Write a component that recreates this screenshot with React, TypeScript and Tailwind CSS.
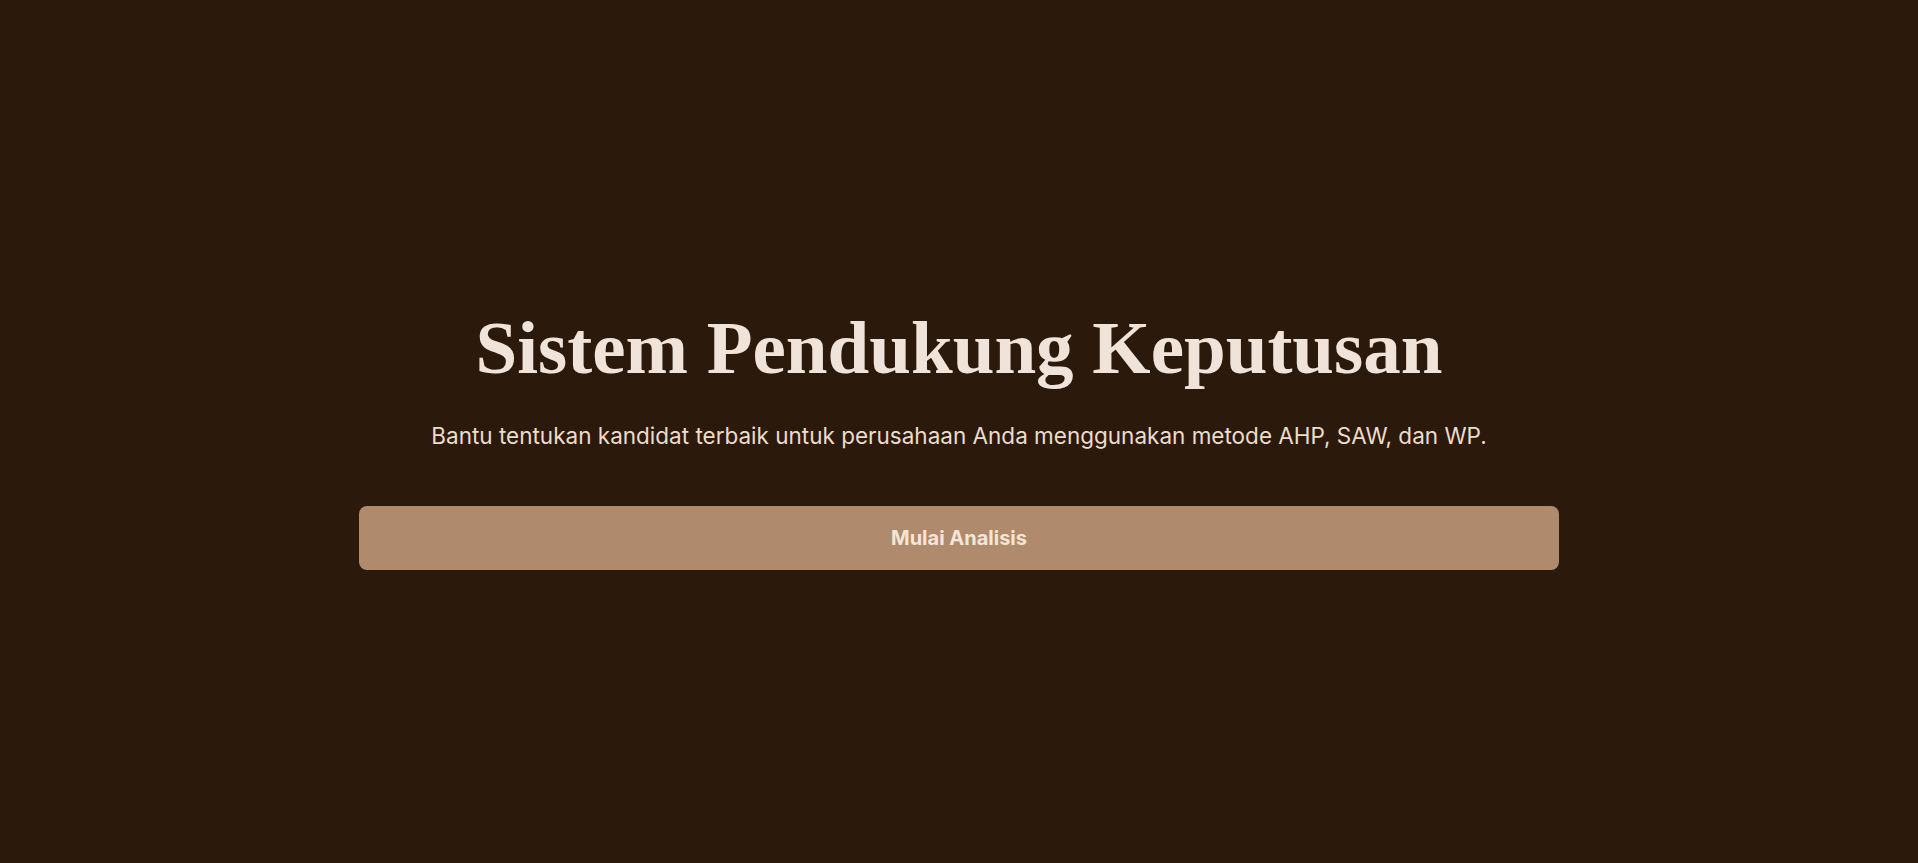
export default function App() {
  return (
    <div className="flex min-h-screen w-full items-center justify-center bg-[#2b1a0c] px-6 pt-2 font-['Inter','Noto_Sans',sans-serif]">
      <div className="flex w-full max-w-[1200px] flex-col items-center text-center">
        <h1 className="font-['Liberation_Serif','DejaVu_Serif',serif] text-[75px] font-bold leading-tight text-[#f0e4da]">
          Sistem Pendukung Keputusan
        </h1>
        <p className="mt-6 text-[22.5px] text-[#ecdccb]">
          Bantu tentukan kandidat terbaik untuk perusahaan Anda menggunakan metode AHP, SAW, dan WP.
        </p>
        <button className="mt-[54px] h-16 w-full rounded-lg bg-[#b08a6d] text-xl font-bold text-[#f3e6d6]">
          Mulai Analisis
        </button>
      </div>
    </div>
  );
}
